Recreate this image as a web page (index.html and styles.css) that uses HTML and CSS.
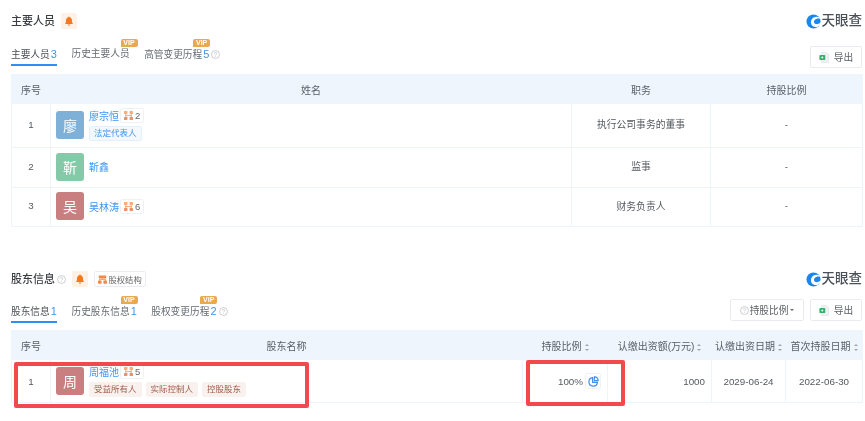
FILE: index.html
```html
<!DOCTYPE html>
<html lang="zh">
<head>
<meta charset="utf-8">
<title>主要人员与股东信息</title>
<link rel="stylesheet" href="styles.css">
</head>
<body>
<svg class="defs" width="0" height="0" aria-hidden="true">
  <defs>
    <symbol id="bell" viewBox="0 0 10 12"><path d="M5 .4c.5 0 .8.3.9.8C7.800 1.700 8.700 3.200 8.700 5v2.500l1 1.300v1H.3v-1l1-1.300V5C1.300 3.200 2.200 1.700 4.100 1.200c.1-.5.400-.8.900-.8zM3.500 10.300h3C6.400 11.200 5.800 11.800 5 11.800s-1.400-.6-1.500-1.500z" fill="#f5781f"/></symbol>
    <symbol id="tree" viewBox="0 0 10 10"><g fill="#f7ad7c"><rect x="0" y="0" width="3.800" height="3.400" rx=".6"/><rect x="6.200" y="0" width="3.800" height="3.400" rx=".6"/><rect x="1.400" y="3" width="1.200" height="4"/><rect x="7.400" y="3" width="1.200" height="4"/><rect x="1.400" y="4.400" width="7.200" height="1.200"/></g><g fill="#f39060"><rect x="0" y="6.600" width="3.800" height="3.400" rx=".6"/><rect x="6.200" y="6.600" width="3.800" height="3.400" rx=".6"/></g></symbol>
    <symbol id="org" viewBox="0 0 12 11"><g fill="#f0894b"><rect x="1" y="0" width="10" height="4.200" rx=".6"/><rect x="0" y="6.800" width="4.800" height="4.200" rx=".6"/><rect x="7.200" y="6.800" width="4.800" height="4.200" rx=".6"/><rect x="1.800" y="5.200" width="8.400" height="1"/><rect x="1.800" y="5.200" width="1" height="2"/><rect x="9.200" y="5.200" width="1" height="2"/><rect x="5.500" y="4" width="1" height="1.500"/></g></symbol>
    <symbol id="help" viewBox="0 0 10 10"><circle cx="5" cy="5" r="4.400" fill="none" stroke="#b8bcc2" stroke-width=".8"/><path d="M3.700 4c0-.8.600-1.300 1.300-1.300S6.300 3.200 6.300 3.900c0 1-1.300 1-1.300 2" fill="none" stroke="#b8bcc2" stroke-width=".8"/><circle cx="5" cy="7.300" r=".5" fill="#b8bcc2"/></symbol>
    <symbol id="xls" viewBox="0 0 12 13"><path d="M3 .5h6l2.500 2.500v9.500H3z" fill="#eef1f3" stroke="#d9dde1" stroke-width=".6"/><rect x=".5" y="3.500" width="7" height="6" rx="1" fill="#33b06e"/><rect x="3" y="5.500" width="2" height="2" fill="#fff"/></symbol>
    <symbol id="logo" viewBox="0 0 16 16"><circle cx="8" cy="8" r="7.500" fill="#1a86f0"/><path d="M16 5.200C13.600 4.200 10.300 4.700 9 6.700c-1 1.600-.4 3.500 1.300 4 1.900.5 4-.2 5.700-1.800-.5 2-1.900 3.900-4.200 5.100-3.400.3-6.400-1.900-6.500-5C5.200 6 7.600 3.200 11 3c2-.1 3.800.7 5 2.200z" fill="#fff"/></symbol>
  </defs>
</svg>
<main class="page">
  <section class="sec sec-staff">
    <header class="sec-head">
      <h2 class="sec-title">主要人员</h2>
      <span class="bell-box"><svg class="bell"><use href="#bell"/></svg></span>
      <span class="logo"><svg class="logo-mark"><use href="#logo"/></svg>天眼查</span>
    </header>
    <div class="tool-row">
      <nav class="tabs">
        <span class="tab active">主要人员<b>3</b></span>
        <span class="tab">历史主要人员<i class="vip">VIP</i></span>
        <span class="tab">高管变更历程<b>5</b><svg class="help"><use href="#help"/></svg><i class="vip">VIP</i></span>
      </nav>
      <div class="actions"><span class="btn btn-export"><svg class="xls"><use href="#xls"/></svg>导出</span></div>
    </div>
    <table class="grid staff">
      <colgroup><col class="c-no"><col class="c-name"><col class="c-job"><col class="c-ratio"></colgroup>
      <thead><tr><th>序号</th><th>姓名</th><th>职务</th><th>持股比例</th></tr></thead>
      <tbody>
        <tr class="r1">
          <td>1</td>
          <td class="who"><div class="person"><span class="avatar blue">廖</span><div class="info"><div class="line"><a class="pname">廖宗恒</a><span class="count"><svg class="tree"><use href="#tree"/></svg>2</span></div><div class="tags"><span class="tag legal">法定代表人</span></div></div></div></td>
          <td>执行公司事务的董事</td><td>-</td>
        </tr>
        <tr class="r2">
          <td>2</td>
          <td class="who"><div class="person"><span class="avatar green">靳</span><div class="info"><div class="line"><a class="pname">靳鑫</a></div></div></div></td>
          <td>监事</td><td>-</td>
        </tr>
        <tr class="r3">
          <td>3</td>
          <td class="who"><div class="person"><span class="avatar red">吴</span><div class="info"><div class="line"><a class="pname">吴林涛</a><span class="count"><svg class="tree"><use href="#tree"/></svg>6</span></div></div></div></td>
          <td>财务负责人</td><td>-</td>
        </tr>
      </tbody>
    </table>
  </section>

  <section class="sec sec-holder">
    <header class="sec-head">
      <h2 class="sec-title">股东信息</h2>
      <svg class="help title-help"><use href="#help"/></svg>
      <span class="bell-box"><svg class="bell"><use href="#bell"/></svg></span>
      <span class="struct"><svg class="org"><use href="#org"/></svg>股权结构</span>
      <span class="logo"><svg class="logo-mark"><use href="#logo"/></svg>天眼查</span>
    </header>
    <div class="tool-row">
      <nav class="tabs">
        <span class="tab active">股东信息<b>1</b></span>
        <span class="tab">历史股东信息<b>1</b><i class="vip">VIP</i></span>
        <span class="tab">股权变更历程<b>2</b><svg class="help"><use href="#help"/></svg><i class="vip">VIP</i></span>
      </nav>
      <div class="actions">
        <span class="btn btn-ratio"><svg class="help"><use href="#help"/></svg>持股比例<i class="caret"></i></span>
        <span class="btn btn-export"><svg class="xls"><use href="#xls"/></svg>导出</span>
      </div>
    </div>
    <table class="grid holders">
      <colgroup><col class="h-no"><col class="h-name"><col class="h-ratio"><col class="h-amt"><col class="h-date"><col class="h-first"></colgroup>
      <thead><tr><th>序号</th><th>股东名称</th><th>持股比例<i class="sort"></i></th><th>认缴出资额(万元)<i class="sort"></i></th><th>认缴出资日期<i class="sort"></i></th><th>首次持股日期<i class="sort"></i></th></tr></thead>
      <tbody>
        <tr class="r4">
          <td>1</td>
          <td class="who"><div class="person"><span class="avatar red">周</span><div class="info"><div class="line"><a class="pname">周福池</a><span class="count"><svg class="tree"><use href="#tree"/></svg>5</span></div><div class="tags"><span class="tag own">受益所有人</span><span class="tag own">实际控制人</span><span class="tag own">控股股东</span></div></div></div></td>
          <td class="ratio-cell"><span class="ratio">100%<span class="pie-box"><svg class="pie" viewBox="0 0 10 10"><path d="M4.200 1.400a3.900 3.900 0 1 0 4.400 4.400H4.200z" fill="none" stroke="#3f8ff0" stroke-width="1.100"/><path d="M5.800.8a3.500 3.500 0 0 1 3.400 3.400H5.800z" fill="none" stroke="#3f8ff0" stroke-width="1.100"/></svg></span></span></td>
          <td class="num">1000</td><td>2029-06-24</td><td>2022-06-30</td>
        </tr>
      </tbody>
    </table>
  </section>
  <div class="mark mark-name"></div>
  <div class="mark mark-ratio"></div>
</main>
</body>
</html>
```
FILE: styles.css
```css
* { box-sizing: border-box; }
html, body { margin: 0; padding: 0; background: #fff; }
body {
  width: 865px;
  height: 421px;
  overflow: hidden;
  font-family: "Liberation Sans", "Noto Sans CJK SC", sans-serif;
  font-size: 10px;
  color: #555a60;
}
.defs { position: absolute; }
.page { position: relative; width: 865px; height: 421px; padding: 0 3px 0 11px; filter: blur(.35px); }

.sec-staff { padding-top: 11px; height: 269px; }
.sec-head { display: flex; align-items: center; height: 20px; }
.sec-title { margin: 0; font-size: 11px; font-weight: 500; color: #3a3d42; line-height: 20px; }
.bell-box { display: flex; align-items: center; justify-content: center; width: 16px; height: 16px; margin-left: 6px; background: #fff1e6; border-radius: 2px; }
.bell { width: 8px; height: 10px; }
.logo { margin-left: auto; display: flex; align-items: center; font-size: 13.500px; font-weight: 500; color: #4a5058; line-height: 14px; }
.logo-mark { width: 15px; height: 15px; margin-right: 1px; }
.title-help { margin-left: 3px; }
.sec-holder .bell-box { margin-left: 6px; }
.struct { display: flex; align-items: center; height: 16px; margin-left: 6px; padding: 0 3px; border: 1px solid #e9edf2; border-radius: 2px; font-size: 8.300px; color: #666; }
.org { width: 9px; height: 9px; margin-right: 1.500px; }

.tool-row { display: flex; justify-content: space-between; height: 43px; }
.sec-holder .tool-row { height: 41px; }
.tabs { display: flex; gap: 14.500px; padding-top: 14px; }
.sec-holder .tabs { padding-top: 13px; }
.tab { position: relative; display: block; height: 21px; font-size: 9.700px; line-height: 18px; color: #666b72; white-space: nowrap; }
.tab b { font-weight: 400; font-size: 11px; color: #3f94f2; margin-left: 1px; }
.tab.active { color: #4a4e54; border-bottom: 2px solid #2f8ff0; width: 46px; }
.vip { position: absolute; left: 49px; top: -6px; width: 17px; height: 8px; border-radius: 2px 2px 2px 0; background: #e9a94f; color: #fff; font-style: normal; font-weight: 700; font-size: 7px; line-height: 8px; text-align: center; }
.help { width: 9px; height: 9px; margin-left: 2px; vertical-align: -1px; }

.actions { display: flex; gap: 6px; padding-top: 15px; }
.sec-holder .actions { padding-top: 10px; }
.btn { display: flex; align-items: center; justify-content: center; height: 22px; border: 1px solid #e8ebef; border-radius: 2px; background: #fff; font-size: 9.700px; color: #5b6066; }
.btn-export { width: 52px; }
.btn-ratio { width: 74px; }
.btn-ratio .help { margin: 0 1px 0 0; }
.xls { width: 10px; height: 11px; margin-right: 5px; }
.caret { width: 0; height: 0; margin-left: 2px; border: 2.500px solid transparent; border-top-color: #666; border-bottom: 0; }

.grid { width: 851px; table-layout: fixed; border-collapse: collapse; }
.grid th { height: 29px; padding: 0; background: #eef5fc; font-weight: 400; font-size: 10px; color: #5b6066; text-align: center; border: 1px solid #eef5fc; white-space: nowrap; }
.grid td { padding: 0; border: 1px solid #eef4fa; text-align: center; font-size: 9.800px; color: #555a60; }
.staff td { padding-bottom: 3px; }
.staff td.who { padding-bottom: 2px; }
.c-no, .h-no { width: 39px; }
.c-name { width: 521px; }
.c-job { width: 139px; }
.c-ratio { width: 152px; }
.h-name { width: 472px; }
.h-ratio { width: 85px; }
.h-amt { width: 104px; }
.h-date { width: 74px; }
.h-first { width: 77px; }
.r1 td { height: 44px; }
.r2 td { height: 40px; }
.r3 td { height: 39px; }
.r4 td { height: 43px; }

.person { display: flex; align-items: center; gap: 5px; padding-left: 5px; text-align: left; }
.avatar { flex: none; display: flex; align-items: center; justify-content: center; width: 28px; height: 28px; border-radius: 3px; color: #fff; font-size: 14px; }
.blue { background: #7fb0d8; }
.green { background: #84c9a8; }
.red { background: #c97f7f; }
.info { display: flex; flex-direction: column; gap: 4px; }
.line { display: flex; align-items: center; height: 13px; }
.pname { color: #3f94f2; font-size: 10px; }
.count { display: flex; align-items: center; height: 15px; padding: 0 3px; margin-left: 1px; border: 1px solid #eff2f5; border-radius: 2px; font-size: 9.500px; color: #666; }
.tree { width: 9px; height: 9px; margin-right: 2px; }
.tags { display: flex; gap: 4px; }
.tag { display: block; height: 15px; padding: 0 5px; border-radius: 2px; font-size: 8.500px; line-height: 15px; white-space: nowrap; }
.legal { background: #f2f8fe; border: 1px solid #e4f0fc; color: #3f94f2; padding: 0 4px; line-height: 13px; }
.own { background: #f9f1ee; color: #a05a4a; }

.sort { display: inline-block; position: relative; width: 4px; height: 7px; margin-left: 3px; vertical-align: -1px; }
.sort::before, .sort::after { content: ""; position: absolute; left: 0; border: 2px solid transparent; }
.sort::before { top: 0; border-top: 0; border-bottom: 2.500px solid #a0a5ab; }
.sort::after { bottom: 0; border-bottom: 0; border-top: 2.500px solid #a0a5ab; }

.ratio-cell { text-align: right; }
.ratio { display: flex; justify-content: flex-end; align-items: center; padding-right: 6px; }
.pie-box { display: flex; align-items: center; justify-content: center; width: 16px; height: 16px; margin-left: 2px; border: 1px solid #eef2f6; border-radius: 2px; }
.pie { width: 11px; height: 11px; }
.grid td.num { text-align: right; padding-right: 6px; }

.mark { position: absolute; border: 4px solid #f2494d; border-radius: 2px; }
.mark-name { left: 14px; top: 362px; width: 295px; height: 46px; }
.mark-ratio { left: 526px; top: 360px; width: 99px; height: 46px; }
```
